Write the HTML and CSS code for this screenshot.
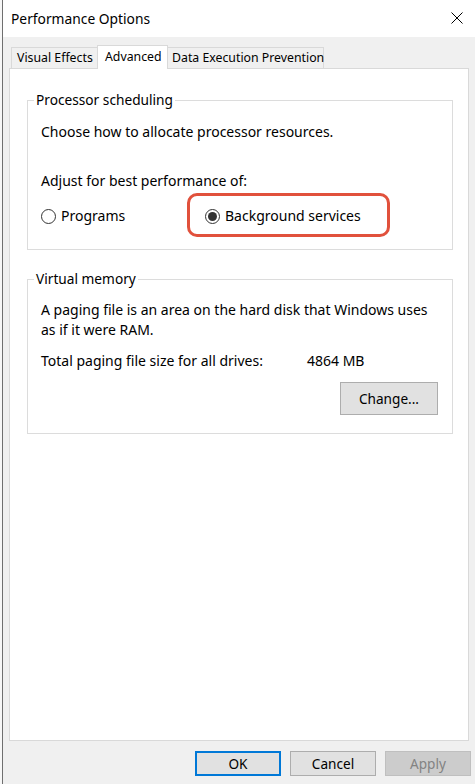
FILE: index.html
```html
<!DOCTYPE html>
<html lang="en">
<head>
<meta charset="utf-8">
<title>Performance Options</title>
<link rel="stylesheet" href="styles.css">
</head>
<body>
<div class="window">
  <div class="titlebar">
    <span class="title">Performance Options</span>
    <svg class="close" width="12" height="12" viewBox="0 0 12 12"><path d="M0.5 0.5 L11.5 11.5 M11.5 0.5 L0.5 11.5" stroke="#000" stroke-width="1" fill="none"/></svg>
  </div>
  <div class="body">
    <div class="tabs">
      <div class="tab tab-ve">Visual Effects</div>
      <div class="tab tab-adv selected">Advanced</div>
      <div class="tab tab-dep">Data Execution Prevention</div>
    </div>
    <div class="panel">
      <fieldset class="group group-proc">
        <legend>Processor scheduling</legend>
        <p class="line">Choose how to allocate processor resources.</p>
        <p class="line adjust">Adjust for best performance of:</p>
        <div class="radios">
          <label class="radio radio-programs"><span class="circle"></span>Programs</label>
          <label class="radio radio-bg checked"><span class="circle"></span>Background services</label>
        </div>
      </fieldset>
      <fieldset class="group group-vm">
        <legend>Virtual memory</legend>
        <p class="line">A paging file is an area on the hard disk that Windows uses<br>as if it were RAM.</p>
        <div class="line total"><span class="total-label">Total paging file size for all drives:</span><span>4864 MB</span></div>
        <div class="change-row"><button class="btn change">Change...</button></div>
      </fieldset>
    </div>
    <div class="actions">
      <button class="btn ok">OK</button>
      <button class="btn">Cancel</button>
      <button class="btn disabled">Apply</button>
    </div>
  </div>
</div>
</body>
</html>
```
FILE: styles.css
```css
html, body {
  margin: 0;
  padding: 0;
  height: 100%;
}
body {
  background: #f7f7f7;
  font-family: "Noto Sans", "Open Sans", sans-serif;
  font-size: 14px;
  color: #000;
  overflow: hidden;
}
.window {
  margin-left: 2px;
  border-left: 1px solid #6f6f6f;
  height: 100%;
  background: #f0f0f0;
  display: flex;
  flex-direction: column;
}
.titlebar {
  height: 37px;
  background: #fff;
  display: flex;
  align-items: center;
  justify-content: space-between;
  padding: 0 12px 0 8px;
  flex: none;
}
.title {
  font-size: 13.8px;
  margin-top: -1px;
}
.close {
  display: block;
  margin-top: -1px;
}
.body {
  padding: 8px 4px 0 6px;
  display: flex;
  flex-direction: column;
}
.tabs {
  display: flex;
  align-items: flex-end;
  padding-left: 2px;
  line-height: 20px;
  font-size: 12.3px;
}
.tab {
  box-sizing: border-box;
  height: 21px;
  border: 1px solid #d9d9d9;
  border-bottom: none;
  background: #f0f0f0;
  padding-left: 5px;
  white-space: nowrap;
}
.tab-ve { width: 87px; }
.tab-adv {
  width: 71px;
  height: 24px;
  margin-left: -1px;
  margin-bottom: -1px;
  background: #fff;
  position: relative;
  z-index: 1;
  padding-left: 7px;
  line-height: 22px;
}
.tab-dep {
  width: 157px;
  margin-left: -1px;
  padding-left: 4px;
}
.panel {
  box-sizing: border-box;
  width: 460px;
  height: 673px;
  background: #fff;
  border: 1px solid #d9d9d9;
  padding: 21px 15px 0 17px;
}
.group {
  margin: 0;
  border: 1px solid #dcdcdc;
  padding: 0 14px 23px 13px;
  min-width: 0;
}
.group legend {
  padding: 0 2px;
  margin-left: -7px;
  line-height: 20px;
  font-size: 13.7px;
}
.line {
  margin: 0;
  line-height: 20px;
}
.group-proc .line:first-of-type { margin-top: 12px; }
.adjust { margin-top: 29px !important; }
.radios {
  display: flex;
  margin-top: 15px;
  line-height: 20px;
}
.radio {
  display: flex;
  align-items: center;
}
.radio-programs { width: 164px; }
.radio-bg { position: relative; }
.radio-bg::after {
  content: "";
  position: absolute;
  left: -18px;
  top: -13px;
  width: 203px;
  height: 44px;
  box-sizing: border-box;
  border: 3px solid #e1513c;
  border-radius: 10px;
}
.circle {
  box-sizing: border-box;
  width: 15px;
  height: 15px;
  border: 1px solid #333;
  border-radius: 50%;
  background: #fff;
  margin-right: 5px;
  display: flex;
  align-items: center;
  justify-content: center;
}
.checked .circle::before {
  content: "";
  width: 9px;
  height: 9px;
  border-radius: 50%;
  background: #333;
}
.group-vm {
  margin-top: 19px;
  padding-bottom: 18px;
}
.group-vm .line:first-of-type { margin-top: 11px; }
.total {
  display: flex;
  margin-top: 12px;
}
.total-label { width: 266px; }
.change-row {
  display: flex;
  justify-content: flex-end;
  margin-top: 11px;
}
.btn {
  box-sizing: border-box;
  font-family: inherit;
  font-size: 13.6px;
  color: #000;
  background: #e1e1e1;
  border: 1px solid #adadad;
  border-radius: 0;
  padding: 0;
  margin: 0;
  height: 25px;
  width: 86px;
}
.change {
  width: 98px;
  height: 33px;
}
.actions {
  display: flex;
  justify-content: flex-end;
  gap: 9px;
  margin-top: 10px;
}
.ok { border: 2px solid #0078d7; }
.disabled {
  background: #cccccc;
  border-color: #bfbfbf;
  color: #838383;
}
```
